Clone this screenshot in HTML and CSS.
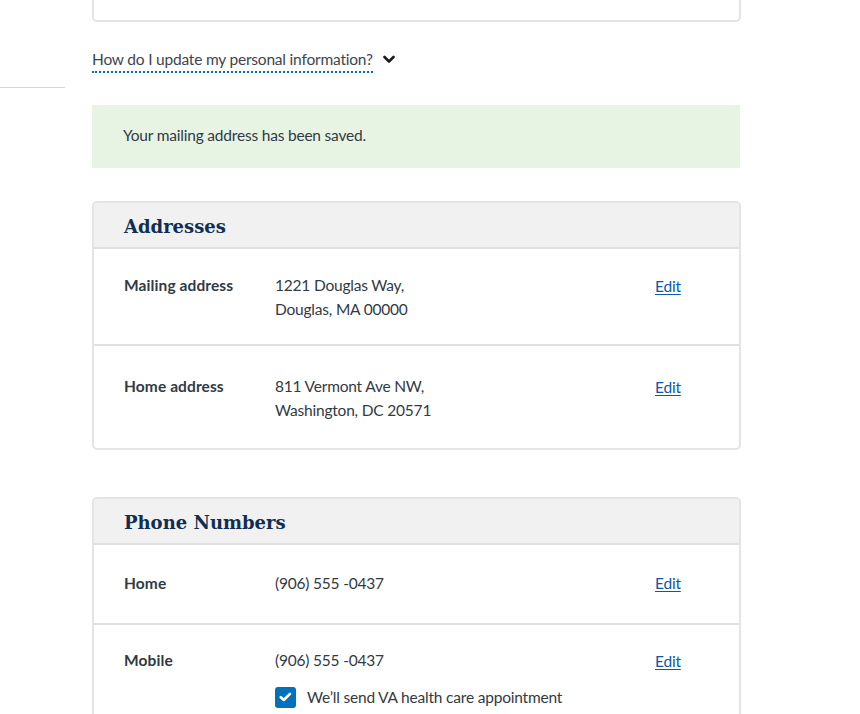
FILE: index.html
```html
<!DOCTYPE html>
<html lang="en">
<head>
<meta charset="utf-8">
<title>Profile</title>
<link rel="stylesheet" href="styles.css">
</head>
<body>
<div class="layout">
  <aside class="sidebar">
    <div class="side-block"></div>
  </aside>
  <main class="main">
    <div class="prev-card"></div>
    <div class="help">
      <span class="help-text">How do I update my personal information?</span>
      <svg class="chev" width="12" height="9" viewBox="0 0 12 9" aria-hidden="true"><polyline points="1.5,2 6,6.5 10.5,2" fill="none" stroke="#1b1b1b" stroke-width="2.6" stroke-linecap="round" stroke-linejoin="round"/></svg>
    </div>
    <div class="alert">Your mailing address has been saved.</div>

    <section class="card">
      <header class="card-head"><h2>Addresses</h2></header>
      <div class="row row-a1">
        <div class="label">Mailing address</div>
        <div class="value">1221 Douglas Way,<br>Douglas, MA 00000</div>
        <a class="edit" href="#">Edit</a>
      </div>
      <div class="row row-a2">
        <div class="label">Home address</div>
        <div class="value">811 Vermont Ave NW,<br>Washington, DC 20571</div>
        <a class="edit" href="#">Edit</a>
      </div>
    </section>

    <section class="card card-phone">
      <header class="card-head"><h2>Phone Numbers</h2></header>
      <div class="row row-p1">
        <div class="label">Home</div>
        <div class="value">(906) 555 -0437</div>
        <a class="edit" href="#">Edit</a>
      </div>
      <div class="row row-p2">
        <div class="label">Mobile</div>
        <div class="value">(906) 555 -0437
          <div class="check">
            <span class="box"><svg width="13" height="10" viewBox="0 0 13 10"><polyline points="1.8,5.2 4.8,8 11,1.8" fill="none" stroke="#fff" stroke-width="2.6" stroke-linecap="round" stroke-linejoin="round"/></svg></span>
            <span>We’ll send VA health care appointment</span>
          </div>
        </div>
        <a class="edit" href="#">Edit</a>
      </div>
    </section>
  </main>
</div>
</body>
</html>
```

FILE: styles.css
```css
* { box-sizing: border-box; }
html, body { margin: 0; padding: 0; background: #fff; }
body {
  font-family: "Lato", "Source Sans Pro", "Noto Sans", sans-serif;
  font-size: 15.5px;
  letter-spacing: -0.2px;
  line-height: 24px;
  color: #323a45;
  overflow: hidden;
  height: 714px;
}
.layout {
  display: grid;
  grid-template-columns: 65px 649px;
  column-gap: 27px;
}
.side-block {
  height: 88px;
  border-bottom: 1px solid #d6d7d9;
}
.prev-card {
  height: 22px;
  border: 2px solid #e4e4e4;
  border-top: none;
  border-radius: 0 0 5px 5px;
}
.help {
  margin-top: 25px;
  display: flex;
  align-items: center;
  height: 26px;
}
.help-text {
  color: #3d4551;
  border-bottom: 2px dotted #0071bb;
  line-height: 24px;
}
.chev { margin-left: 10px; margin-top: -2px; }
.alert {
  margin-top: 32px;
  width: 648px;
  background: #e7f4e4;
  padding: 18px 31px 21px;
  color: #323a45;
}
.card {
  margin-top: 33px;
  border: 2px solid #e4e4e4;
  border-radius: 5px;
  overflow: hidden;
}
.card-phone { margin-top: 47px; }
.card-head {
  background: #f1f1f1;
  border-bottom: 2px solid #e1e1e1;
  height: 46px;
  padding: 4px 30px 0;
  display: flex;
  align-items: center;
}
.card-head h2 {
  margin: 0;
  font-family: "DejaVu Serif", "Liberation Serif", serif;
  font-weight: 700;
  font-size: 18px;
  color: #112e51;
  letter-spacing: 0;
}
.row {
  display: grid;
  grid-template-columns: 151px 380px auto;
  padding: 24px 30px 23px;
  border-bottom: 2px solid #e1e1e1;
}
.row:last-child { border-bottom: none; }
.row-a2 { padding-top: 28px; padding-bottom: 26px; }
.row-p1 { padding-top: 26px; padding-bottom: 28px; }
.row-p2 { padding-top: 23px; }
.label { font-weight: 700; color: #323a45; letter-spacing: 0.1px; }
.value { color: #323a45; }
.edit {
  color: #0b58a6;
  text-decoration: underline;
  text-underline-offset: 2px;
  text-decoration-thickness: 1px;
  align-self: start;
  margin-top: 1px;
}
.row-p1 .edit { margin-top: 0; }
.check {
  display: flex;
  align-items: center;
  margin-top: 13px;
  gap: 11px;
}
.box {
  width: 21px;
  height: 21px;
  border-radius: 3px;
  background: #0071bb;
  display: flex;
  align-items: center;
  justify-content: center;
}
```
